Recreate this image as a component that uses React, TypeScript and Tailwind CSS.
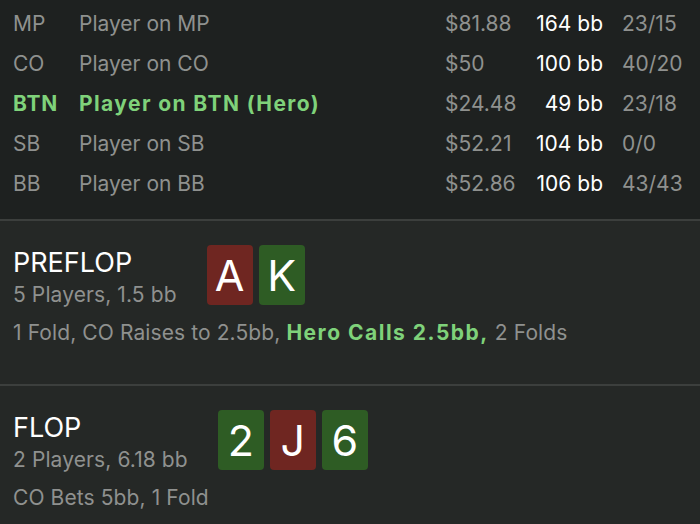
const players = [
  { pos: 'MP', name: 'Player on MP', money: '$81.88', bb: '164 bb', stats: '23/15' },
  { pos: 'CO', name: 'Player on CO', money: '$50', bb: '100 bb', stats: '40/20' },
  { pos: 'BTN', name: 'Player on BTN (Hero)', money: '$24.48', bb: '49 bb', stats: '23/18', hero: true },
  { pos: 'SB', name: 'Player on SB', money: '$52.21', bb: '104 bb', stats: '0/0' },
  { pos: 'BB', name: 'Player on BB', money: '$52.86', bb: '106 bb', stats: '43/43' },
]

type CardProps = { rank: string; color: 'red' | 'green' }

function Card({ rank, color }: CardProps) {
  return (
    <div
      className={`flex h-[60px] w-[46px] items-center justify-center rounded-[4px] text-[43px] leading-none text-white ${
        color === 'red' ? 'bg-[#6f2621]' : 'bg-[#2e5c24]'
      }`}
    >
      {rank}
    </div>
  )
}

function Street({
  title,
  sub,
  cards,
  children,
  last,
}: {
  title: string
  sub: string
  cards: CardProps[]
  children: React.ReactNode
  last?: boolean
}) {
  return (
    <section className={`bg-[#252826] pl-[13px] pt-[24px] ${last ? 'pb-[18px]' : 'pb-[37px]'}`}>
      <div className="flex items-start gap-[30px]">
        <div className="mt-[2px]">
          <p className="text-[27px] leading-[32px] text-white">{title}</p>
          <p className="mt-[3px] text-[21px] leading-[26px] tracking-[0.1px] text-[#8f918f]">{sub}</p>
        </div>
        <div className="flex gap-[6px]">
          {cards.map((c, i) => (
            <Card key={i} {...c} />
          ))}
        </div>
      </div>
      <p className="mt-[11px] text-[21px] leading-[28px] tracking-[0.1px] text-[#8f918f]">{children}</p>
    </section>
  )
}

export default function App() {
  return (
    <div
      className="h-[524px] w-[700px] overflow-hidden bg-[#252826]"
      style={{ fontFamily: 'Inter, "Noto Sans", sans-serif' }}
    >
      <section className="bg-[#1e2120] pb-[15px] pl-[13px] pt-[4px]">
        {players.map((p) => (
          <div key={p.pos} className="flex h-10 items-center text-[21px] text-[#8f918f]">
            <span className={`w-[66px] ${p.hero ? 'font-bold tracking-[0.8px] text-[#7fd27a]' : ''}`}>{p.pos}</span>
            <span className={`w-[366px] ${p.hero ? 'font-bold tracking-[1.4px] text-[#7fd27a]' : ''}`}>
              {p.name}
            </span>
            <span className="w-[80px]">{p.money}</span>
            <span className="w-[78px] text-right text-white">{p.bb}</span>
            <span className="ml-[19px]">{p.stats}</span>
          </div>
        ))}
      </section>
      <div className="h-[2px] bg-[#3c3f3d]" />
      <Street
        title="PREFLOP"
        sub="5 Players, 1.5 bb"
        cards={[
          { rank: 'A', color: 'red' },
          { rank: 'K', color: 'green' },
        ]}
      >
        1 Fold, CO Raises to 2.5bb,{' '}
        <span className="font-bold tracking-[1.5px] text-[#7fd27a]">Hero Calls 2.5bb,</span> 2 Folds
      </Street>
      <div className="h-[2px] bg-[#3c3f3d]" />
      <Street
        title="FLOP"
        sub="2 Players, 6.18 bb"
        cards={[
          { rank: '2', color: 'green' },
          { rank: 'J', color: 'red' },
          { rank: '6', color: 'green' },
        ]}
        last
      >
        CO Bets 5bb, 1 Fold
      </Street>
    </div>
  )
}
